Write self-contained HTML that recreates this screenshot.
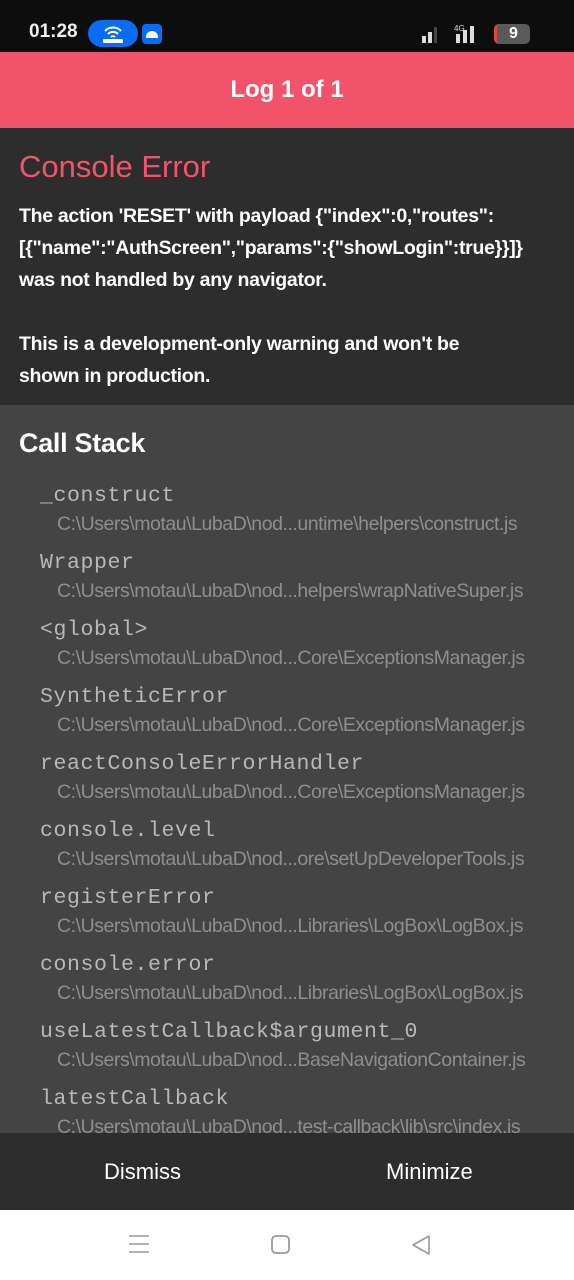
<!DOCTYPE html><html><head><style>
body{margin:0;width:574px;height:1280px;overflow:hidden;background:#fff;font-family:"Liberation Sans",sans-serif;position:relative}
.sb{position:absolute;top:0;left:0;width:574px;height:52px;background:#0d0d0d}
.hdr{position:absolute;top:52px;left:0;width:574px;height:76px;background:#f1546a;color:#fff;font-size:24px;text-align:center;line-height:76px;font-weight:bold}
.msg{position:absolute;top:128px;left:0;width:574px;height:277px;background:#2d2d2d;color:#fff}
.stk{position:absolute;top:405px;left:0;width:574px;height:728px;background:#444;overflow:hidden}
.btm{position:absolute;top:1133px;left:0;width:574px;height:77px;background:#2d2d2d;color:#fff;font-size:22px}
.nav{position:absolute;top:1210px;left:0;width:574px;height:70px;background:#fff}
.fr{position:absolute;left:40px;font-family:"Liberation Mono",monospace;font-size:21.5px;color:#b8b8b8;letter-spacing:0.6px}
.pa{position:absolute;left:57px;font-size:19.5px;color:#8e8e8e;letter-spacing:-0.45px}
</style></head><body>
<div class="sb">
<div style="position:absolute;left:29px;top:21px;color:#eee;font-size:19px;font-weight:bold">01:28</div>
<div style="position:absolute;left:88px;top:20px;width:50px;height:27px;border-radius:14px;background:#0a6cf5"></div>
<svg style="position:absolute;left:100px;top:22px" width="26" height="22" viewBox="0 0 26 22"><path d="M5 9a11 11 0 0 1 16 0M8 12a7 7 0 0 1 10 0M11 15a3 3 0 0 1 4 0" stroke="#fff" stroke-width="2" fill="none"/><rect x="3" y="17" width="20" height="4" rx="1" fill="#fff"/></svg>
<div style="position:absolute;left:142px;top:24px;width:20px;height:20px;border-radius:4px;background:#0a6cf5"></div>
<div style="position:absolute;left:146px;top:31px;width:12px;height:7px;border-radius:6px 6px 0 0;background:#fff"></div>
<svg style="position:absolute;left:420px;top:22px" width="80" height="22"><rect x="2" y="14" width="4" height="7" fill="#ddd"/><rect x="8" y="10" width="4" height="11" fill="#ddd"/><rect x="14" y="5" width="3" height="16" fill="#444"/><text x="34" y="9" fill="#ddd" font-size="8" font-family="Liberation Sans">4G</text><rect x="36" y="12" width="4" height="9" fill="#ddd"/><rect x="43" y="8" width="4" height="13" fill="#ddd"/><rect x="50" y="4" width="4" height="17" fill="#ddd"/></svg>
<div style="position:absolute;left:494px;top:24px;width:36px;height:20px;border-radius:5px;background:#5a5a5a;border-left:3px solid #e04444;color:#fff;font-size:16px;font-weight:bold;text-align:center;line-height:20px;box-sizing:border-box">9</div>
</div>
<div class="hdr">Log 1 of 1</div>
<div class="msg">
<div style="position:absolute;left:19px;top:21px;font-size:31px;color:#f1546a">Console Error</div>
<div style="position:absolute;left:19px;top:72px;width:555px;font-size:19.5px;line-height:32px;font-weight:bold;letter-spacing:-0.3px">The action 'RESET' with payload {"index":0,"routes":<br>[{"name":"AuthScreen","params":{"showLogin":true}}]}<br>was not handled by any navigator.<br><br>This is a development-only warning and won't be<br>shown in production.</div>
</div>
<div class="stk">
<div style="position:absolute;left:19px;top:23px;font-size:27px;color:#fff;font-weight:bold;letter-spacing:-0.3px">Call Stack</div>
<div class="fr" style="top:79px">_construct</div><div class="pa" style="top:108px">C:\Users\motau\LubaD\nod...untime\helpers\construct.js</div>
<div class="fr" style="top:146px">Wrapper</div><div class="pa" style="top:175px">C:\Users\motau\LubaD\nod...helpers\wrapNativeSuper.js</div>
<div class="fr" style="top:213px">&lt;global&gt;</div><div class="pa" style="top:242px">C:\Users\motau\LubaD\nod...Core\ExceptionsManager.js</div>
<div class="fr" style="top:280px">SyntheticError</div><div class="pa" style="top:309px">C:\Users\motau\LubaD\nod...Core\ExceptionsManager.js</div>
<div class="fr" style="top:347px">reactConsoleErrorHandler</div><div class="pa" style="top:376px">C:\Users\motau\LubaD\nod...Core\ExceptionsManager.js</div>
<div class="fr" style="top:414px">console.level</div><div class="pa" style="top:443px">C:\Users\motau\LubaD\nod...ore\setUpDeveloperTools.js</div>
<div class="fr" style="top:481px">registerError</div><div class="pa" style="top:510px">C:\Users\motau\LubaD\nod...Libraries\LogBox\LogBox.js</div>
<div class="fr" style="top:548px">console.error</div><div class="pa" style="top:577px">C:\Users\motau\LubaD\nod...Libraries\LogBox\LogBox.js</div>
<div class="fr" style="top:615px">useLatestCallback$argument_0</div><div class="pa" style="top:644px">C:\Users\motau\LubaD\nod...BaseNavigationContainer.js</div>
<div class="fr" style="top:682px">latestCallback</div><div class="pa" style="top:711px">C:\Users\motau\LubaD\nod...test-callback\lib\src\index.js</div>
</div>
<div class="btm"><div style="position:absolute;left:104px;top:26px">Dismiss</div><div style="position:absolute;left:386px;top:26px">Minimize</div></div>
<div class="nav">
<svg style="position:absolute;left:128px;top:24px" width="22" height="20"><path d="M1 2h20M1 10h20M1 18h20" stroke="#999" stroke-width="1.6"/></svg>
<svg style="position:absolute;left:270px;top:24px" width="22" height="22"><rect x="2" y="2" width="17" height="17" rx="4" stroke="#999" stroke-width="1.8" fill="none"/></svg>
<svg style="position:absolute;left:410px;top:24px" width="22" height="22"><path d="M19 2L3 11l16 9z" stroke="#999" stroke-width="1.6" fill="none" stroke-linejoin="round"/></svg>
</div>
</body></html>
